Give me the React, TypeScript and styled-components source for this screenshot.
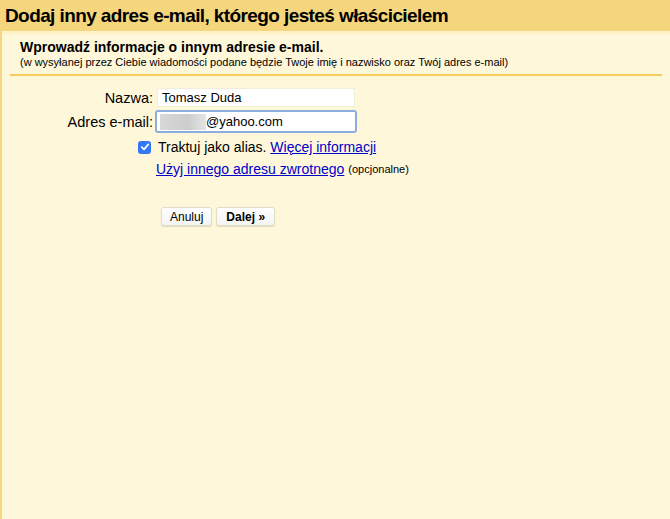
import { FC } from 'react';
import styled, { createGlobalStyle } from 'styled-components';

const GlobalStyle = createGlobalStyle`
  html, body {
    margin: 0;
    padding: 0;
    background: #fff7da;
  }
  body {
    font-family: Arial, "Liberation Sans", Helvetica, sans-serif;
    color: #000;
  }
`;

const Page = styled.div`
  width: 670px;
  height: 519px;
  display: flex;
  flex-direction: column;
  background: #fff7da;
  border-left: 2px solid #f5d77f;
  box-sizing: border-box;
`;

const Header = styled.header`
  height: 31px;
  display: flex;
  align-items: center;
  padding: 0 5px;
  background: #f5d67c;
  margin-left: -2px;
`;

const Title = styled.h1`
  margin: 0;
  font-size: 19px;
  font-weight: bold;
  letter-spacing: -0.6px;
`;

const Body = styled.main`
  flex: 1;
  border-top: 3px solid #fff2c6;
  padding: 5px 8px 0 8px;
`;

const Intro = styled.section`
  padding: 0 0 5px 10px;
  border-bottom: 2px solid #f7cf5c;
`;

const Heading = styled.div`
  font-size: 14px;
  font-weight: bold;
  line-height: 17px;
`;

const Note = styled.div`
  font-size: 11px;
  line-height: 13px;
`;

const Form = styled.div`
  display: grid;
  grid-template-columns: 143px auto;
  column-gap: 3px;
  row-gap: 3px;
  padding-top: 12px;
  align-items: center;
`;

const Label = styled.label`
  font-size: 14.5px;
  text-align: right;
`;

const Input = styled.div<{ $focused?: boolean }>`
  box-sizing: border-box;
  width: ${({ $focused }) => ($focused ? '202px' : '198px')};
  height: ${({ $focused }) => ($focused ? '23px' : '19px')};
  margin-left: ${({ $focused }) => ($focused ? '-1px' : '1px')};
  background: #fff;
  border: ${({ $focused }) => ($focused ? '2px solid #8cadde' : '1px solid #f2eedd')};
  border-radius: ${({ $focused }) => ($focused ? '3px' : '0')};
  display: flex;
  align-items: center;
  padding-left: ${({ $focused }) => ($focused ? '3px' : '4px')};
  font-size: 13px;
`;

const Blur = styled.span`
  display: inline-block;
  width: 46px;
  height: 16px;
  background: linear-gradient(90deg, #d8d8d8, #cdcdcd 60%, #e4e4e4);
`;

const Empty = styled.span``;

const OptionRow = styled.div`
  display: flex;
  align-items: center;
  font-size: 14px;
  margin-top: 3px;
`;

const Check = styled.span`
  width: 13px;
  height: 13px;
  border-radius: 3px;
  background: #3478f6;
  margin-left: -18px;
  margin-right: 7px;
  display: flex;
  align-items: center;
  justify-content: center;
`;

const Link = styled.a`
  color: #0000cc;
  text-decoration: underline;
  cursor: pointer;
`;

const Small = styled.span`
  font-size: 11px;
  margin-left: 4px;
`;

const Buttons = styled.div`
  display: flex;
  gap: 4px;
  margin: 30px 0 0 151px;
`;

const Button = styled.button<{ $primary?: boolean }>`
  font-family: Arial, "Liberation Sans", sans-serif;
  font-size: 12px;
  font-weight: ${({ $primary }) => ($primary ? 'bold' : 'normal')};
  height: 19px;
  padding: 0 ${({ $primary }) => ($primary ? '9px' : '8px')};
  background: linear-gradient(#ffffff, #f4f4f4);
  border: 1px solid #e2dccb;
  border-radius: 3px;
  box-shadow: 0 1px 1px rgba(0, 0, 0, 0.12);
  color: #000;
`;

const App: FC = () => (
  <Page>
    <GlobalStyle />
    <Header>
      <Title>Dodaj inny adres e-mail, którego jesteś właścicielem</Title>
    </Header>
    <Body>
      <Intro>
        <Heading>Wprowadź informacje o innym adresie e-mail.</Heading>
        <Note>(w wysyłanej przez Ciebie wiadomości podane będzie Twoje imię i nazwisko oraz Twój adres e-mail)</Note>
      </Intro>
      <Form>
        <Label>Nazwa:</Label>
        <Input>Tomasz Duda</Input>
        <Label>Adres e-mail:</Label>
        <Input $focused>
          <Blur />
          @yahoo.com
        </Input>
        <Empty />
        <OptionRow>
          <Check>
            <svg width="10" height="10" viewBox="0 0 10 10">
              <path d="M1.8 5.2 L4 7.4 L8.3 2.4" fill="none" stroke="#fff" strokeWidth="1.7" strokeLinecap="round" strokeLinejoin="round" />
            </svg>
          </Check>
          Traktuj jako alias.&nbsp;<Link>Więcej informacji</Link>
        </OptionRow>
        <Empty />
        <OptionRow>
          <Link>Użyj innego adresu zwrotnego</Link>
          <Small>(opcjonalne)</Small>
        </OptionRow>
      </Form>
      <Buttons>
        <Button>Anuluj</Button>
        <Button $primary>Dalej »</Button>
      </Buttons>
    </Body>
  </Page>
);

export default App;
